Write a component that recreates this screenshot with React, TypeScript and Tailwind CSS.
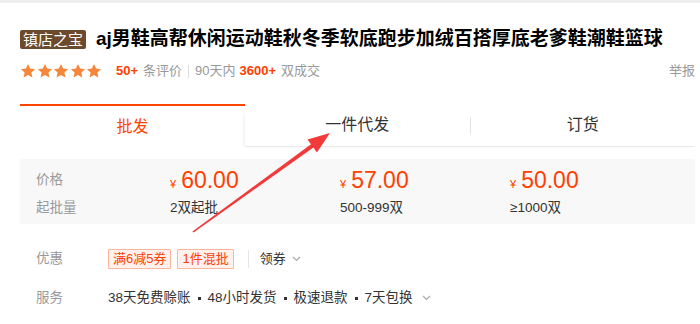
import React from "react";

const FONT = '"Liberation Sans", Arial, "Noto Sans CJK SC", sans-serif';

function Star() {
  return (
    <svg width="16" height="16" viewBox="0 0 24 24">
      <path
        d="M12 1.5l3.2 6.9 7.4.8-5.5 5.1 1.5 7.4L12 17.9l-6.6 3.8 1.5-7.4L1.4 9.2l7.4-.8z"
        fill="#f5873c"
      />
    </svg>
  );
}

function Chevron({ ml }: { ml: string }) {
  return (
    <svg width="9" height="6" viewBox="0 0 9 6" className={ml}>
      <path d="M1 1l3.5 3.5L8 1" stroke="#aaaaaa" strokeWidth="1.2" fill="none" />
    </svg>
  );
}

function Price({ v, sub }: { v: string; sub: string }) {
  return (
    <div className="w-[170px]">
      <div className="flex items-baseline h-[24px] text-[#ff4000]">
        <span className="text-[11px] mr-[5px]">¥</span>
        <span className="text-[23px] leading-[24px]">{v}</span>
      </div>
      <div className="mt-[8px] text-[13.5px] leading-[16px] text-[#333]">{sub}</div>
    </div>
  );
}

function Dot() {
  return <span className="inline-block w-[3px] h-[3px] bg-[#333] mx-[7px] align-middle" />;
}

export default function App() {
  return (
    <div className="relative w-[700px] h-[324px] bg-white overflow-hidden" style={{ fontFamily: FONT }}>
      <div className="h-[3px] bg-[#eeeeee]" />
      <div className="pl-[20px] pr-[5px]">
        {/* title */}
        <div className="mt-[26px] flex items-center h-[20px]">
          <span className="h-[19px] px-[3px] rounded-[2px] bg-[#6b4a2e] text-white text-[15px] leading-[19px] flex items-center">
            镇店之宝
          </span>
          <span className="ml-[10px] text-[19px] leading-[20px] font-bold text-black whitespace-nowrap">
            aj男鞋高帮休闲运动鞋秋冬季软底跑步加绒百搭厚底老爹鞋潮鞋篮球
          </span>
        </div>
        {/* rating */}
        <div className="mt-[14px] flex items-center h-[16px] text-[13px]">
          <div className="flex gap-[0.5px]">
            <Star />
            <Star />
            <Star />
            <Star />
            <Star />
          </div>
          <span className="ml-[14px] font-bold text-[#ff4000]">50+</span>
          <span className="ml-[5px] text-[#999]">条评价</span>
          <span className="mx-[6px] w-px h-[13px] bg-[#dddddd]" />
          <span className="text-[#999]">90天内</span>
          <span className="ml-[4px] font-bold text-[#ff4000]">3600+</span>
          <span className="ml-[5px] text-[#999]">双成交</span>
          <span className="ml-auto text-[#999]">举报</span>
        </div>
        {/* tabs */}
        <div className="mt-[25px] flex h-[43px] text-[16px]">
          <div className="w-[225px] border-t-2 border-[#ff4400] flex items-center justify-center text-[#ff4400]">
            批发
          </div>
          <div className="flex-1 mt-[8px] flex items-center border-b border-[#ebebeb] rounded-tl-[3px] shadow-[-2px_1px_3px_-1px_rgba(0,0,0,0.07)]">
            <div className="flex-1 flex items-center justify-center text-[#333] -mt-[8px]">一件代发</div>
            <div className="w-px h-[17px] bg-[#e5e5e5] -mt-[8px]" />
            <div className="flex-1 flex items-center justify-center text-[#333] -mt-[8px]">订货</div>
          </div>
        </div>
        {/* price box */}
        <div className="mt-[12px] h-[65px] bg-[#f8f8f8] rounded-[2px] pt-[9px] pl-[16px] flex">
          <div className="w-[134px] text-[13.5px] text-[#999]">
            <div className="h-[24px] flex items-center">价格</div>
            <div className="mt-[8px] leading-[16px]">起批量</div>
          </div>
          <Price v="60.00" sub="2双起批" />
          <Price v="57.00" sub="500-999双" />
          <Price v="50.00" sub="≥1000双" />
        </div>
        {/* coupons */}
        <div className="mt-[25px] pl-[16px] flex items-center h-[20px] text-[13px]">
          <span className="w-[72px] text-[#999] text-[13.5px]">优惠</span>
          <span className="h-[20px] px-[4px] border border-[#fdb59c] bg-[#fff2ee] text-[#ff4000] leading-[18px] rounded-[1px]">
            满6减5券
          </span>
          <span className="ml-[6px] h-[20px] px-[4px] border border-[#fdb59c] bg-[#fff2ee] text-[#ff4000] leading-[18px] rounded-[1px]">
            1件混批
          </span>
          <span className="ml-[14px] w-px h-[18px] bg-[#e5e5e5]" />
          <span className="ml-[11px] text-[#333]">领券</span>
          <Chevron ml="ml-[6px]" />
        </div>
        {/* services */}
        <div className="mt-[19px] pl-[16px] flex items-center h-[20px] text-[13.5px]">
          <span className="w-[72px] text-[#999]">服务</span>
          <span className="text-[#333] flex items-center">
            38天免费赊账
            <Dot />
            48小时发货
            <Dot />
            极速退款
            <Dot />
            7天包换
          </span>
          <Chevron ml="ml-[9px]" />
        </div>
      </div>
      {/* annotation arrow */}
      <svg className="absolute left-0 top-0 pointer-events-none" width="700" height="324" viewBox="0 0 700 324">
        <polygon
          points="192.4,231.4 311,144.3 307.5,139.4 330,133 316.9,152.4 313.4,147.5 193.6,232.6"
          fill="#f23a3a"
        />
      </svg>
    </div>
  );
}
